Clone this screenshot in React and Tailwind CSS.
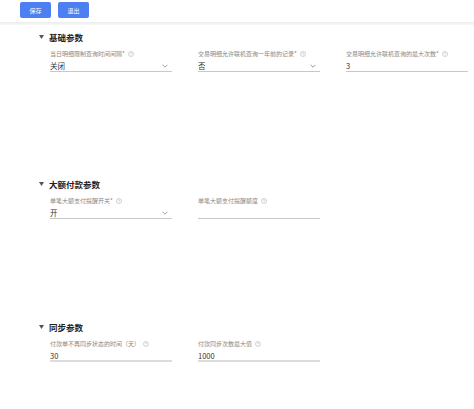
import React from 'react';

const sections = [
  {
    title: '基础参数',
    height: 'h-[147px]',
    fields: [
      { label: '当日明细限制查询时间间隔', required: true, value: '关闭', select: true },
      { label: '交易明细允许联机查询一年前的记录', required: true, value: '否', select: true },
      { label: '交易明细允许联机查询的最大次数', required: true, value: '3' },
    ],
  },
  {
    title: '大额付款参数',
    height: 'h-[143px]',
    fields: [
      { label: '单笔大额支付提醒开关', required: true, value: '开', select: true },
      { label: '单笔大额支付提醒额度', required: false, value: '' },
    ],
  },
  {
    title: '同步参数',
    height: 'h-[80px]',
    thick: true,
    fields: [
      { label: '付款单不再同步状态的时间（天）', required: false, value: '30' },
      { label: '付款同步次数最大值', required: false, value: '1000' },
    ],
  },
];

const HelpIcon = () => (
  <svg width="6" height="6" viewBox="0 0 12 12" className="ml-[3px] shrink-0">
    <circle cx="6" cy="6" r="5" fill="none" stroke="#b5b5b5" strokeWidth="1.2" />
    <path d="M4.6 4.8a1.4 1.4 0 1 1 2 1.3c-.5.2-.6.5-.6 1" fill="none" stroke="#b5b5b5" strokeWidth="1.1" />
    <circle cx="6" cy="8.8" r=".6" fill="#b5b5b5" />
  </svg>
);

const Chevron = () => (
  <svg width="6" height="4" viewBox="0 0 10 6" className="shrink-0">
    <path d="M1 1l4 4 4-4" fill="none" stroke="#777" strokeWidth="1.2" />
  </svg>
);

const Field = ({ field, thick }) => (
  <div className="w-[122px]">
    <div className="flex items-center h-[8px] text-[6px] leading-[8px] text-[#888] whitespace-nowrap">
      {field.label}
      {field.required && <span>*</span>}
      <HelpIcon />
    </div>
    <div
      className={`mt-[3px] flex items-center justify-between h-[11px] pr-[4px] text-[7.5px] text-[#333] ${
        thick ? 'border-b-2 border-[#dcdcdc]' : 'border-b border-[#c8c8c8]'
      }`}
    >
      <span>{field.value}</span>
      {field.select && <Chevron />}
    </div>
  </div>
);

export default function App() {
  return (
    <div className="w-[474px] h-[409px] bg-white overflow-hidden font-['Noto_Sans_CJK_SC','Noto_Sans',sans-serif]">
      {/* toolbar */}
      <div className="flex gap-[7px] pl-[20px] pt-[2px] h-[22px]">
        <button className="w-[31px] h-[16px] rounded-[2px] bg-[#4d7ef2] text-white text-[6px]">保存</button>
        <button className="w-[31px] h-[16px] rounded-[2px] bg-[#4d7ef2] text-white text-[6px]">退出</button>
      </div>
      <div className="h-[3px] bg-gradient-to-b from-[#ececec] to-[#f8f8f8]" />

      <div className="pt-[6px]">
        {sections.map((s) => (
          <div key={s.title} className={s.height}>
            <div className="flex items-center h-[12px] pl-[39px]">
              <svg width="5" height="4" viewBox="0 0 10 8" className="shrink-0">
                <path d="M0 0h10L5 8z" fill="#555" />
              </svg>
              <span className="ml-[5px] text-[8.5px] font-bold text-[#222]">{s.title}</span>
            </div>
            <div className="mt-[7px] pl-[50px] flex gap-[26px]">
              {s.fields.map((f) => (
                <Field key={f.label} field={f} thick={s.thick} />
              ))}
            </div>
          </div>
        ))}
      </div>
    </div>
  );
}
